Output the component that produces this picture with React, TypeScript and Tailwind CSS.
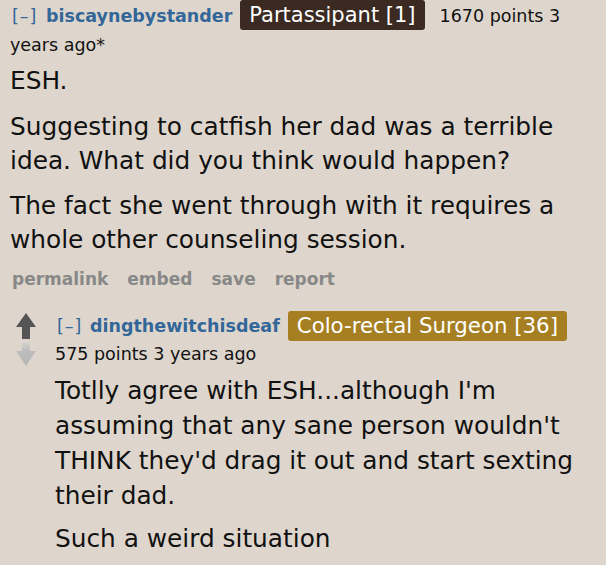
import React from "react";

const font = { fontFamily: '"DejaVu Sans", Verdana, sans-serif' };

function UpArrow() {
  return (
    <svg width="20" height="27" viewBox="0 0 20 27" className="block">
      <polygon points="10,0 20,14 14,14 14,26 6,26 6,14 0,14" fill="#555555" />
    </svg>
  );
}

function DownArrow() {
  return (
    <svg width="20" height="25" viewBox="0 0 20 25" className="block">
      <defs>
        <linearGradient id="dg" x1="0" y1="0" x2="0" y2="1">
          <stop offset="0" stopColor="#d8d4ce" />
          <stop offset="0.35" stopColor="#bdbdbd" />
          <stop offset="1" stopColor="#b5b5b5" />
        </linearGradient>
      </defs>
      <polygon points="6,0 14,0 14,9 20,9 10,24 0,9 6,9" fill="url(#dg)" />
    </svg>
  );
}

export default function App() {
  return (
    <div
      className="w-[606px] h-[565px] overflow-hidden bg-[#ded6cc] text-[#111] pl-[10px] pr-[6px]"
      style={font}
    >
      {/* Parent comment header */}
      <div className="text-[17.5px] leading-[26px] pt-[2px]">
        <span className="text-[#336699] ml-[2px] tracking-[1px]">[–]</span>{" "}
        <span className="font-bold text-[#336699] ml-[3px]">biscaynebystander</span>
        <span className="inline-block align-middle rounded-[3px] bg-[#3a2a21] text-white text-[21px] leading-[30px] pl-[9px] pr-[9px] ml-[8px] mr-[15px] relative -top-[2px]">
          Partassipant [1]
        </span>
        <span>1670 points 3 years ago*</span>
      </div>

      {/* Parent body */}
      <div className="text-[24.8px] leading-[34px] mt-[6px]">
        <p>ESH.</p>
        <p className="mt-[12px]">Suggesting to catfish her dad was a terrible idea. What did you think would happen?</p>
        <p className="mt-[11px]">The fact she went through with it requires a whole other counseling session.</p>
      </div>

      {/* Actions */}
      <div className="flex gap-[19px] text-[17px] leading-[20px] font-bold text-[#888888] mt-[12px] pl-[2px]">
        <span>permalink</span>
        <span>embed</span>
        <span>save</span>
        <span>report</span>
      </div>

      {/* Child comment */}
      <div className="flex mt-[23px]">
        <div className="flex flex-col items-center w-[20px] ml-[6px] gap-[2px] pt-[1px]">
          <UpArrow />
          <DownArrow />
        </div>
        <div className="ml-[19px]">
          <div className="text-[17.5px] leading-[25px]">
            <span className="text-[#336699] ml-[2px] tracking-[1px]">[–]</span>{" "}
            <span className="font-bold text-[#336699] ml-[2px]">dingthewitchisdeaf</span>
            <span className="inline-block align-middle rounded-[3px] bg-[#a67f22] text-white text-[21.3px] leading-[30px] px-[9px] ml-[8px] relative -top-[1px]">
              Colo-rectal Surgeon [36]
            </span>
          </div>
          <div className="text-[17.5px] leading-[24px]">575 points 3 years ago</div>
          <div className="text-[24.8px] leading-[35px] mt-[7px]">
            <p>Totlly agree with ESH...although I'm assuming that any sane person wouldn't THINK they'd drag it out and start sexting their dad.</p>
            <p className="mt-[8px]">Such a weird situation</p>
          </div>
        </div>
      </div>
    </div>
  );
}
